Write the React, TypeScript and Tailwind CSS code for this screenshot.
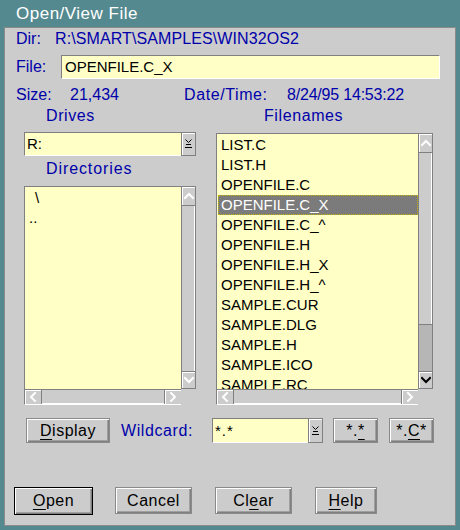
import React from "react";

const FONT = "font-['Liberation_Sans',Arial,Helvetica,sans-serif]";

type Dir = "up" | "down" | "left" | "right";

function Chev({ dir, color }: { dir: Dir; color: string }) {
  const vertical = dir === "up" || dir === "down";
  const d: Record<Dir, string> = {
    up: "M1 6 L5 2 L9 6",
    down: "M1 2 L5 6 L9 2",
    left: "M6 1 L2 5 L6 9",
    right: "M2 1 L6 5 L2 9",
  };
  return (
    <svg
      width={vertical ? 10 : 8}
      height={vertical ? 8 : 10}
      viewBox={vertical ? "0 0 10 8" : "0 0 8 10"}
    >
      <path d={d[dir]} stroke={color} strokeWidth={2} fill="none" strokeLinecap="square" />
    </svg>
  );
}

function DropGlyph() {
  return (
    <svg width="7" height="10" viewBox="0 0 7 10">
      <path d="M0.5 0.5 L3.5 3.5 L6.5 0.5" stroke="#000" strokeWidth={1} fill="none" />
      <path d="M1 5.5 H6" stroke="#000" strokeWidth={1} />
      <path d="M0 8.5 H7" stroke="#000" strokeWidth={1} />
    </svg>
  );
}

function ArrowBtn({ dir, color, cls }: { dir: Dir; color: string; cls: string }) {
  return (
    <div
      className={`${cls} flex items-center justify-center bg-[#cccccc] border border-[#808080] shadow-[inset_1px_1px_0_#ffffff]`}
    >
      <Chev dir={dir} color={color} />
    </div>
  );
}

function VScroll({ thumb, downColor }: { thumb: number | null; downColor: string }) {
  return (
    <div className="w-[15px] flex flex-col bg-[#cccccc] border border-[#808080]">
      <ArrowBtn dir="up" color="#ffffff" cls="h-[19px] shrink-0 border-0 border-b" />
      {thumb === null ? (
        <div className="flex-1 bg-[#cccccc] shadow-[inset_-1px_0_0_#ffffff]" />
      ) : (
        <>
          <div
            className="shrink-0 bg-[#cccccc] border-b border-[#808080] shadow-[inset_-1px_0_0_#ffffff]"
            style={{ height: thumb }}
          />
          <div className="flex-1 bg-[#b6b6b6]" />
        </>
      )}
      <ArrowBtn dir="down" color={downColor} cls="h-[17px] shrink-0 border-0 border-t" />
    </div>
  );
}

function HScroll() {
  return (
    <div className="flex-1 flex bg-[#cccccc] border-t border-[#808080] border-b border-b-white border-l border-l-[#808080]">
      <ArrowBtn dir="left" color="#ffffff" cls="w-[17px] h-full border-0 border-r" />
      <div className="flex-1 shadow-[inset_0_-1px_0_#ffffff]" />
      <ArrowBtn dir="right" color="#ffffff" cls="w-[17px] h-full border-0 border-l" />
    </div>
  );
}

function Combo({ text, w, h, textCls }: { text: string; w: string; h: string; textCls: string }) {
  return (
    <div className={`${w} ${h} flex`}>
      <div className="flex-1 flex items-center bg-[#ffffc6] border-t border-l border-[#808080] border-b border-b-white pl-[2px]">
        <span className={`${textCls} text-black leading-[18px]`}>{text}</span>
      </div>
      <div className="w-[15px] flex items-center justify-center bg-[#cccccc] border border-[#808080] shadow-[inset_1px_1px_0_#ffffff]">
        <DropGlyph />
      </div>
    </div>
  );
}

function Btn({
  children,
  cls,
  def,
}: {
  children: React.ReactNode;
  cls: string;
  def?: boolean;
}) {
  return (
    <div
      className={`${cls} flex items-center justify-center bg-[#cccccc] border ${
        def ? "border-black" : "border-[#8a8a8a]"
      } shadow-[inset_1px_1px_0_#ffffff,inset_-1px_-1px_0_#808080,inset_-2px_-2px_0_#a0a0a0] text-[16px] tracking-[0.5px] text-black leading-[18px]`}
    >
      {children}
    </div>
  );
}

const U = ({ c }: { c: string }) => (
  <span className="underline underline-offset-[3px] decoration-1">{c}</span>
);

const files = [
  "LIST.C",
  "LIST.H",
  "OPENFILE.C",
  "OPENFILE.C_X",
  "OPENFILE.C_^",
  "OPENFILE.H",
  "OPENFILE.H_X",
  "OPENFILE.H_^",
  "SAMPLE.CUR",
  "SAMPLE.DLG",
  "SAMPLE.H",
  "SAMPLE.ICO",
  "SAMPLE.RC",
];

export default function App() {
  const blue = "text-[#0000aa]";
  return (
    <div className={`${FONT} w-[460px] h-[530px] bg-[#54898f] overflow-hidden`}>
      {/* title bar */}
      <div className="h-[27px] flex items-center pl-[16px]">
        <span className="text-white text-[17px] tracking-[0.5px] leading-[18px]">Open/View File</span>
      </div>
      {/* body */}
      <div className="ml-[4px] w-[452px] h-[499px] bg-[#cccccc] border border-[#8a8a8a] flex flex-col">
        {/* Dir */}
        <div className={`mt-[2px] ml-[11px] flex h-[18px] items-center text-[16px] leading-[18px] ${blue}`}>
          <span className="w-[39px]">Dir:</span>
          <span className="tracking-[0.1px]">R:\SMART\SAMPLES\WIN32OS2</span>
        </div>
        {/* File */}
        <div className="mt-[7px] ml-[11px] flex h-[24px] items-center">
          <span className={`w-[45px] text-[16px] leading-[18px] ${blue}`}>File:</span>
          <div className="w-[379px] h-[24px] flex items-center bg-[#ffffc6] border-t border-l border-[#808080] border-b border-r border-b-white border-r-white pl-[3px]">
            <span className="text-[15px] leading-[18px] text-black">OPENFILE.C_X</span>
          </div>
        </div>
        {/* Size */}
        <div className={`mt-[7px] ml-[11px] flex h-[18px] items-center text-[16px] leading-[18px] ${blue}`}>
          <span className="w-[54px]">Size:</span>
          <span className="w-[114px]">21,434</span>
          <span className="w-[103px] tracking-[0.6px]">Date/Time:</span>
          <span className="tracking-[-0.2px]">8/24/95 14:53:22</span>
        </div>
        {/* columns */}
        <div className="mt-[3px] ml-[19px] flex gap-[20px]">
          {/* left */}
          <div className="w-[172px] flex flex-col">
            <div className={`h-[18px] pl-[22px] text-[16px] leading-[18px] tracking-[0.6px] ${blue}`}>Drives</div>
            <div className="mt-[7px]">
              <Combo text="R:" w="w-[172px]" h="h-[24px]" textCls="text-[15px]" />
            </div>
            <div className={`mt-[4px] h-[18px] pl-[22px] text-[16px] leading-[18px] tracking-[0.9px] ${blue}`}>
              Directories
            </div>
            <div className="mt-[8px] h-[219px] flex flex-col">
              <div className="h-[203px] flex">
                <div className="flex-1 bg-[#ffffc6] border-t border-l border-[#808080] pt-[1px] text-[15px] text-black">
                  <div className="h-[20px] leading-[20px] pl-[10px]">\</div>
                  <div className="h-[20px] leading-[20px] pl-[4px]">..</div>
                </div>
                <VScroll thumb={null} downColor="#ffffff" />
              </div>
              <div className="h-[16px] flex">
                <HScroll />
                <div className="w-[15px]" />
              </div>
            </div>
          </div>
          {/* right */}
          <div className="w-[217px] flex flex-col">
            <div className={`h-[18px] pl-[48px] text-[16px] leading-[18px] tracking-[0.6px] ${blue}`}>Filenames</div>
            <div className="mt-[8px] h-[272px] flex flex-col">
              <div className="h-[256px] flex">
                <div className="flex-1 bg-[#ffffc6] border-t border-l border-[#808080] pt-[1px] overflow-hidden text-[15px]">
                  {files.map((f, i) =>
                    i === 3 ? (
                      <div
                        key={f}
                        className="h-[20px] leading-[18px] ml-[1px] mr-0 pl-[2px] bg-[#7b7b7b] text-white border border-dotted border-[#c8b400]"
                      >
                        {f}
                      </div>
                    ) : (
                      <div key={f} className="h-[20px] leading-[20px] pl-[4px] text-black">
                        {f}
                      </div>
                    )
                  )}
                </div>
                <VScroll thumb={172} downColor="#000000" />
              </div>
              <div className="h-[16px] flex">
                <HScroll />
                <div className="w-[15px]" />
              </div>
            </div>
          </div>
        </div>
        {/* wildcard row */}
        <div className="mt-[13px] ml-[21px] flex items-center h-[25px]">
          <Btn cls="w-[84px] h-[25px]">
            <span>
              <U c="D" />
              isplay
            </span>
          </Btn>
          <span className={`ml-[11px] w-[91px] text-[16px] leading-[18px] tracking-[0.6px] ${blue}`}>Wildcard:</span>
          <Combo text="*.*" w="w-[111px]" h="h-[25px]" textCls="text-[15px] tracking-[1px]" />
          <Btn cls="ml-[10px] w-[45px] h-[25px]">
            <span>
              *.<U c="*" />
            </span>
          </Btn>
          <Btn cls="ml-[11px] w-[45px] h-[25px]">
            <span>
              *.<U c="C" />*
            </span>
          </Btn>
        </div>
        {/* buttons */}
        <div className="mt-[44px] ml-[9px] flex items-start">
          <Btn cls="w-[79px] h-[28px]" def>
            <span>
              <U c="O" />
              pen
            </span>
          </Btn>
          <Btn cls="ml-[22px] w-[77px] h-[27px]">
            <span>Cancel</span>
          </Btn>
          <Btn cls="ml-[23px] w-[77px] h-[27px]">
            <span>
              Cl<U c="e" />
              ar
            </span>
          </Btn>
          <Btn cls="ml-[23px] w-[62px] h-[27px]">
            <span>
              <U c="H" />
              elp
            </span>
          </Btn>
        </div>
      </div>
    </div>
  );
}
